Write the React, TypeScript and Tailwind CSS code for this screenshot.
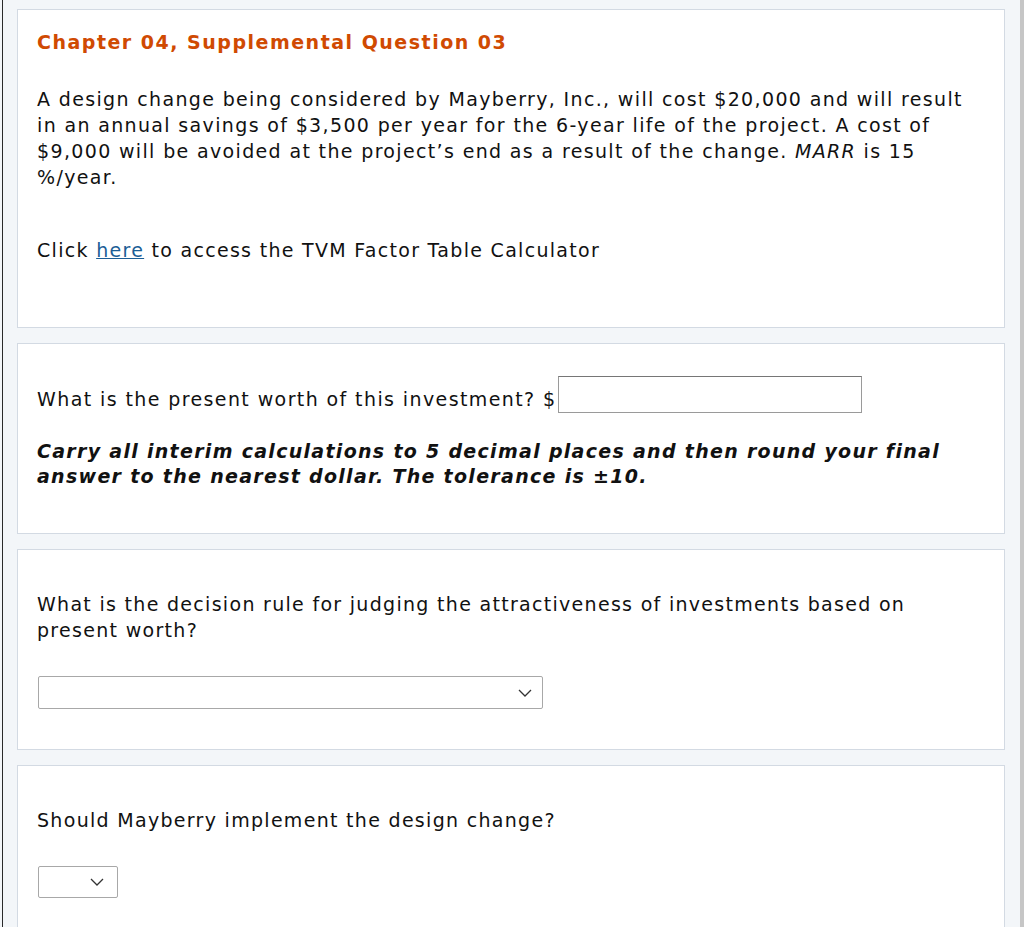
import React from 'react';

const Chevron: React.FC = () => (
  <svg width="14" height="8" viewBox="0 0 14 8" fill="none" stroke="#333" strokeWidth="1.3">
    <path d="M1 1 L7 7 L13 1" />
  </svg>
);

const Card: React.FC<{ className?: string; children: React.ReactNode }> = ({ className = '', children }) => (
  <div className={`bg-white border border-[#d3dae3] px-[19px] ${className}`}>{children}</div>
);

const App: React.FC = () => {
  return (
    <div
      className="flex min-h-screen bg-[#f3f6f9] text-[19px] leading-[26px] tracking-[1.3px] text-[#111]"
      style={{ fontFamily: '"DejaVu Sans", Verdana, sans-serif' }}
    >
      <div className="w-[2px] bg-[#f3f6f9]" />
      <div className="w-px bg-[#2a2a2a]" />
      <main className="flex-1 pt-[9px] pl-[14px] pr-[15px] flex flex-col gap-[15px]">
        {/* Question intro */}
        <Card className="pt-[19px] pb-[64px]">
          <h1 className="font-bold tracking-[1.5px] text-[#d04a02]">Chapter 04, Supplemental Question 03</h1>
          <p className="mt-[31px] tracking-[1.35px]">
            A design change being considered by Mayberry, Inc., will cost $20,000 and will result
            <br />
            in an annual savings of $3,500 per year for the 6-year life of the project. A cost of
            <br />
            $9,000 will be avoided at the project’s end as a result of the change. <i>MARR</i> is 15
            <br />
            %/year.
          </p>
          <p className="mt-[47px]">
            Click <a href="#" className="text-[#1b5e96] underline">here</a> to access the TVM Factor Table Calculator
          </p>
        </Card>

        {/* Present worth */}
        <Card className="pt-[32px] pb-[44px]">
          <div className="flex items-end">
            <span className="tracking-[1.4px]">What is the present worth of this investment? $</span>
            <input
              type="text"
              className="ml-[1px] mb-[-1px] w-[304px] h-[37px] border border-[#9a9a9a] border-t-[#767676] bg-white outline-none"
            />
          </div>
          <p className="mt-[27px] font-bold italic leading-[25px] tracking-[1.3px]">
            Carry all interim calculations to 5 decimal places and then round your final
            <br />
            answer to the nearest dollar. The tolerance is ±10.
          </p>
        </Card>

        {/* Decision rule */}
        <Card className="pt-[41px] pb-[40px]">
          <p>
            What is the decision rule for judging the attractiveness of investments based on
            <br />
            present worth?
          </p>
          <div className="mt-[33px] ml-[1px] w-[505px] h-[33px] border border-[#a8a8a8] rounded-[2px] flex items-center justify-end pr-[10px]">
            <Chevron />
          </div>
        </Card>

        {/* Implement */}
        <Card className="pt-[41px] pb-[60px]">
          <p>Should Mayberry implement the design change?</p>
          <div className="mt-[33px] ml-[1px] w-[80px] h-[32px] border border-[#a8a8a8] rounded-[2px] flex items-center justify-end pr-[13px]">
            <Chevron />
          </div>
        </Card>
      </main>
      <div className="w-[4px] bg-[#c6c6c6]" />
    </div>
  );
};

export default App;
